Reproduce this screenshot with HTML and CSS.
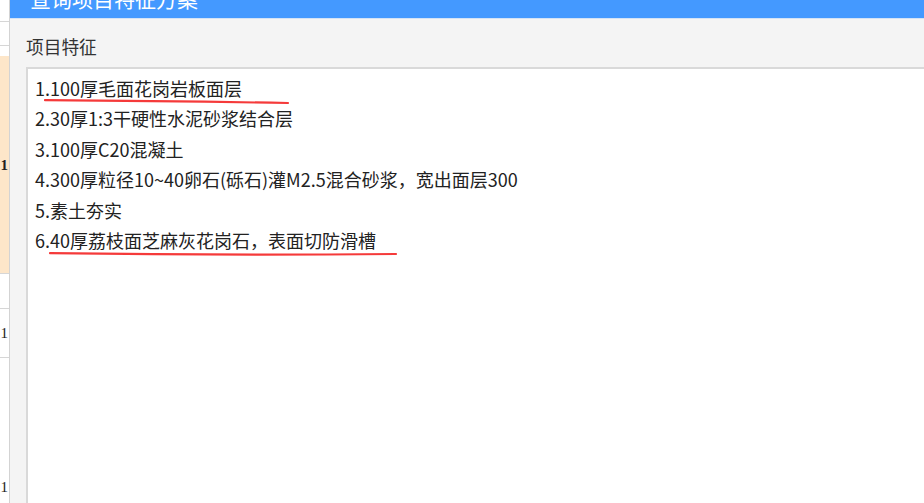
FILE: index.html
```html
<!DOCTYPE html>
<html lang="zh-CN">
<head>
<meta charset="utf-8">
<title>查询项目特征方案</title>
<link rel="stylesheet" href="styles.css">
</head>
<body>
<div class="page">
  <div class="sidebar">
    <div class="row r1"></div>
    <div class="row r2"></div>
    <div class="row r3"></div>
    <div class="row r4 sel"><span class="num bold">1</span></div>
    <div class="row r5"></div>
    <div class="row r6"><span class="num">1</span></div>
    <div class="row r7"><span class="num">1</span></div>
  </div>
  <div class="dialog">
    <div class="titlebar"><span class="title">查询项目特征方案</span></div>
    <div class="body">
      <div class="label">项目特征</div>
      <div class="textarea">
        <div class="line">1.100厚毛面花岗岩板面层</div>
        <div class="line">2.30厚1:3干硬性水泥砂浆结合层</div>
        <div class="line">3.100厚C20混凝土</div>
        <div class="line">4.300厚粒径10~40卵石(砾石)灌M2.5混合砂浆，宽出面层300</div>
        <div class="line">5.素土夯实</div>
        <div class="line">6.40厚荔枝面芝麻灰花岗石，表面切防滑槽</div>
      </div>
    </div>
  </div>
  <svg class="marks" width="924" height="503" viewBox="0 0 924 503">
    <path d="M45 100.2 Q170 101 288 103" />
    <path d="M50 253.2 Q220 255.5 396 254" />
  </svg>
</div>
</body>
</html>
```
FILE: styles.css
```css
html, body {
  margin: 0;
  padding: 0;
}
body {
  width: 924px;
  height: 503px;
  overflow: hidden;
  background: #ffffff;
}
.page {
  position: relative;
  display: flex;
  width: 924px;
  height: 503px;
  overflow: hidden;
}
.sidebar {
  width: 9px;
  flex: none;
  display: flex;
  flex-direction: column;
  overflow: hidden;
  background: #ffffff;
}
.row {
  flex: none;
  display: flex;
  align-items: center;
  justify-content: flex-end;
  border-bottom: 1px solid #d6d6d6;
  font-family: "Liberation Serif", serif;
  font-size: 15px;
  color: #222;
}
.r1 { height: 21px; }
.r2 { height: 23px; }
.r3 { height: 10px; border-bottom: none; }
.r4 { height: 217px; }
.r5 { height: 34px; }
.r6 { height: 48px; }
.r7 { height: 258px; border-bottom: none; }
.sel { background: #fde6c9; }
.num {
  display: block;
  margin-right: 1px;
  line-height: 16px;
}
.bold { font-weight: bold; }

.dialog {
  flex: 1;
  display: flex;
  flex-direction: column;
  border-left: 1px solid #d3d3d3;
  background: #f4f4f4;
  min-width: 0;
}
.titlebar {
  height: 18px;
  flex: none;
  background: #4499ff;
  border-bottom: 1px solid #d4e3f6;
  overflow: hidden;
  padding-left: 20px;
}
.title {
  display: block;
  margin-top: -14px;
  font-family: "Noto Sans CJK SC", sans-serif;
  font-size: 21px;
  line-height: 24px;
  color: #ffffff;
}
.body {
  flex: 1;
  display: flex;
  flex-direction: column;
  padding-left: 16px;
  min-height: 0;
}
.label {
  margin-top: 15px;
  height: 24px;
  line-height: 24px;
  font-family: "Noto Sans CJK SC", sans-serif;
  font-size: 17.7px;
  color: #333;
}
.textarea {
  margin-top: 9px;
  flex: 1;
  background: #ffffff;
  border-top: 2px solid #d9d9d9;
  border-left: 2px solid #d9d9d9;
  padding: 4px 7px;
  font-family: "Noto Sans CJK SC", sans-serif;
  font-size: 18px;
  color: #222;
}
.line {
  height: 30.4px;
  line-height: 30.4px;
  white-space: nowrap;
}
.marks {
  position: absolute;
  left: 0;
  top: 0;
  pointer-events: none;
}
.marks path {
  fill: none;
  stroke: #f53a3a;
  stroke-width: 2.2;
  stroke-linecap: round;
}
```
